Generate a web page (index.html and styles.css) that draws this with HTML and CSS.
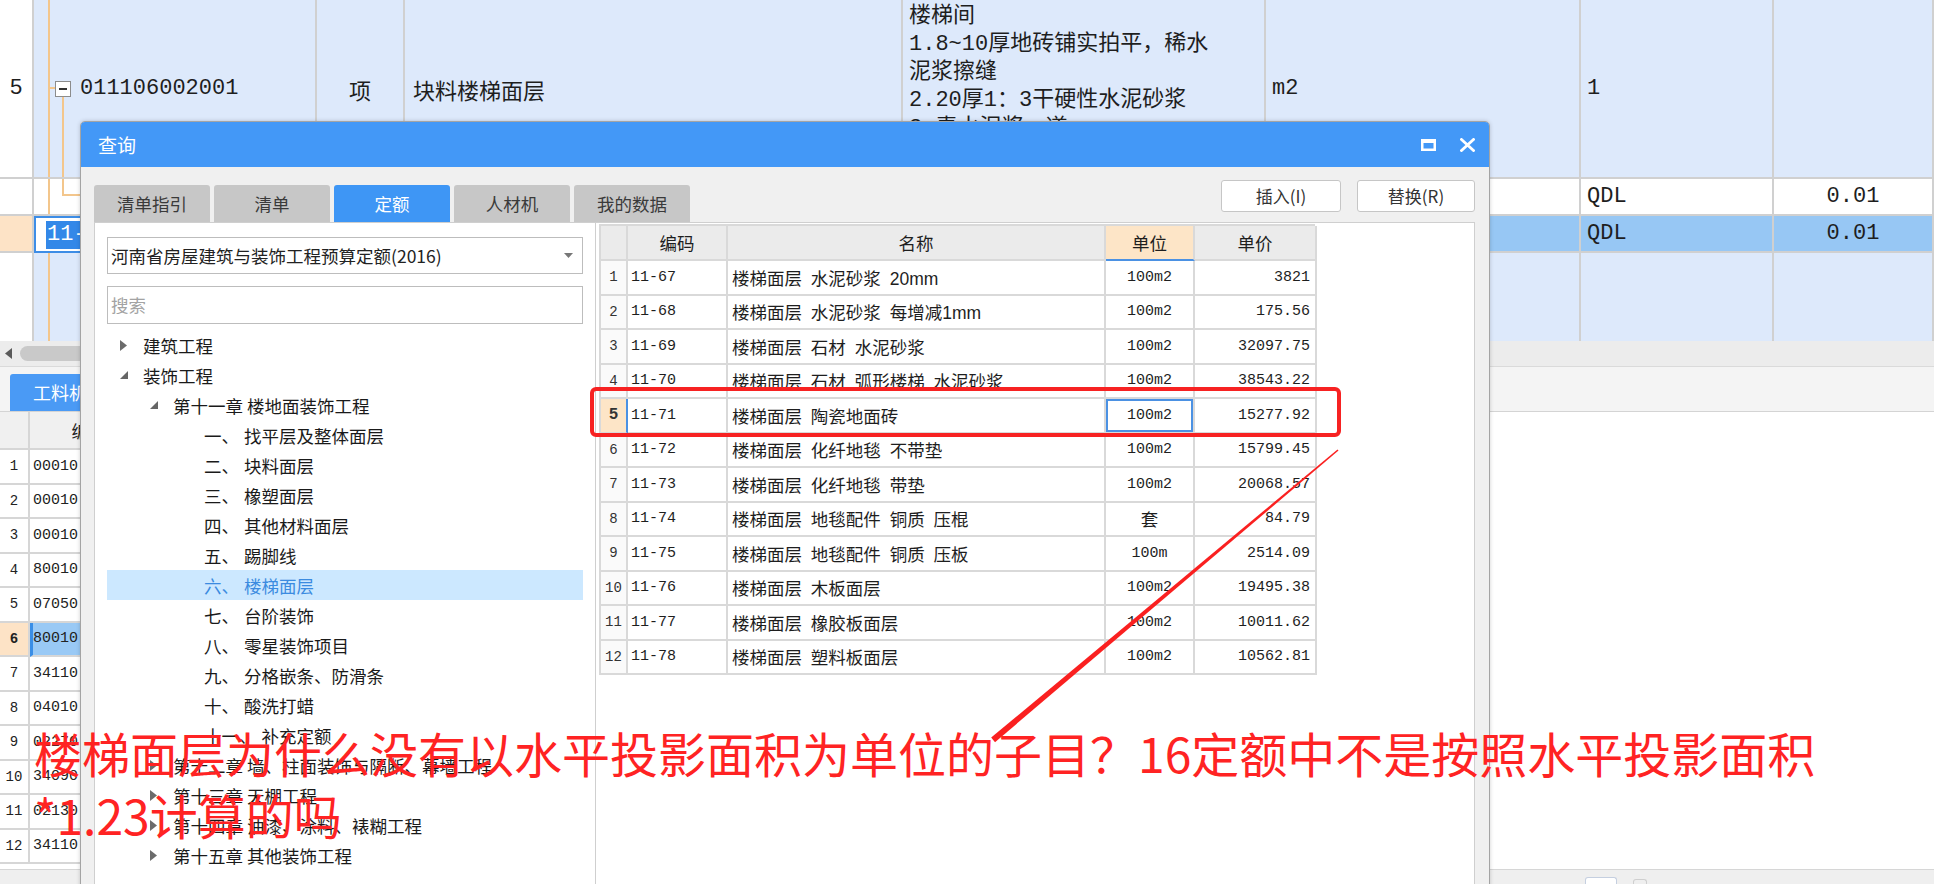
FILE: index.html
```html
<!DOCTYPE html>
<html lang="zh-CN">
<head>
<meta charset="utf-8">
<title>查询</title>
<link rel="stylesheet" href="styles.css">
</head>
<body>
<div class="app">
  <div class="topgrid">
    <div class="c ctr">5</div>
    <div class="c lb tree-r5"><span class="minus"></span><span>011106002001</span></div>
    <div class="c lb ctr cjk">项</div>
    <div class="c lb pl8 cjk">块料楼梯面层</div>
    <div class="c lb desc">楼梯间<br>1.8~10厚地砖铺实拍平，稀水<br>泥浆擦缝<br>2.20厚1：3干硬性水泥砂浆<br>3.素水泥浆一道</div>
    <div class="c lb pl6">m2</div>
    <div class="c lb pl6">1</div>
    <div class="c lb"></div>

    <div class="c"></div>
    <div class="c tree-ra"></div>
    <div class="c"></div>
    <div class="c"></div>
    <div class="c"></div>
    <div class="c"></div>
    <div class="c pl6">QDL</div>
    <div class="c ctr">0.01</div>

    <div class="c or"></div>
    <div class="c edit"><span class="selt">11-71</span></div>
    <div class="c sb"></div>
    <div class="c sb"></div>
    <div class="c sb"></div>
    <div class="c sb"></div>
    <div class="c sb pl6">QDL</div>
    <div class="c sb ctr">0.01</div>

    <div class="c nb"></div>
    <div class="c lb nb tree-fill"></div>
    <div class="c lb nb"></div>
    <div class="c lb nb"></div>
    <div class="c lb nb"></div>
    <div class="c lb nb"></div>
    <div class="c lb nb"></div>
    <div class="c lb nb"></div>
  </div>

  <div class="hscroll">
    <svg class="harrow" width="7" height="11" viewBox="0 0 7 11"><polygon points="7,0 0,5.5 7,11" fill="#5a5a5a"/></svg>
    <div class="thumb"></div>
  </div>

  <div class="btabs"><div class="btab">工料机</div></div>

  <div class="bgrid">
    <div class="bg-row bg-head"><div class="bc"></div><div class="bc hc">编码</div><div class="bc"></div></div>
    <div class="bg-row"><div class="bc rn">1</div><div class="bc code">00010</div><div class="bc"></div></div>
    <div class="bg-row"><div class="bc rn">2</div><div class="bc code">00010</div><div class="bc"></div></div>
    <div class="bg-row"><div class="bc rn">3</div><div class="bc code">00010</div><div class="bc"></div></div>
    <div class="bg-row"><div class="bc rn">4</div><div class="bc code">80010</div><div class="bc"></div></div>
    <div class="bg-row"><div class="bc rn">5</div><div class="bc code">07050</div><div class="bc"></div></div>
    <div class="bg-row"><div class="bc rn rsel">6</div><div class="bc code csel">80010</div><div class="bc"></div></div>
    <div class="bg-row"><div class="bc rn">7</div><div class="bc code">34110</div><div class="bc"></div></div>
    <div class="bg-row"><div class="bc rn">8</div><div class="bc code">04010</div><div class="bc"></div></div>
    <div class="bg-row"><div class="bc rn">9</div><div class="bc code">02270</div><div class="bc"></div></div>
    <div class="bg-row"><div class="bc rn">10</div><div class="bc code">34090</div><div class="bc"></div></div>
    <div class="bg-row"><div class="bc rn">11</div><div class="bc code">02130</div><div class="bc"></div></div>
    <div class="bg-row"><div class="bc rn">12</div><div class="bc code">34110</div><div class="bc"></div></div>
  </div>

  <div class="status"><span class="st-ico"></span><span class="st-ico2"></span></div>
</div>

<div class="dialog">
  <div class="dlg-title">
    <span class="dlg-name">查询</span>
    <div class="dlg-ctrls">
      <svg width="15" height="12" viewBox="0 0 15 12"><rect x="1.25" y="1.25" width="12.5" height="9.5" fill="none" stroke="#fff" stroke-width="2.5"/><rect x="0" y="0" width="15" height="4" fill="#fff"/></svg>
      <svg width="15" height="14" viewBox="0 0 15 14"><path d="M1.5 1.5 L13.5 12.5 M13.5 1.5 L1.5 12.5" stroke="#fff" stroke-width="2.8" stroke-linecap="square"/></svg>
    </div>
  </div>
  <div class="dlg-body">
    <div class="dlg-head">
      <div class="tabs">
        <div class="tab">清单指引</div>
        <div class="tab">清单</div>
        <div class="tab active">定额</div>
        <div class="tab">人材机</div>
        <div class="tab">我的数据</div>
      </div>
      <div class="btns">
        <div class="btn b1">插入(I)</div>
        <div class="btn b2">替换(R)</div>
      </div>
    </div>
    <div class="panes">
      <div class="lpane">
        <div class="select"><span>河南省房屋建筑与装饰工程预算定额(2016)</span><svg width="9" height="5" viewBox="0 0 9 5"><polygon points="0,0 9,0 4.5,5" fill="#777"/></svg></div>
        <div class="search">搜索</div>
        <ul class="tree">
          <li class="l0"><span class="arr"><svg width="7" height="11" viewBox="0 0 7 11"><polygon points="0,0 7,5.5 0,11" fill="#6b6b6b"/></svg></span>建筑工程</li>
          <li class="l0"><span class="arr"><svg width="8" height="8" viewBox="0 0 8 8"><polygon points="8,0 8,8 0,8" fill="#666"/></svg></span>装饰工程</li>
          <li class="l1"><span class="arr"><svg width="8" height="8" viewBox="0 0 8 8"><polygon points="8,0 8,8 0,8" fill="#666"/></svg></span>第十一章 楼地面装饰工程</li>
          <li class="l2"><span class="pre">一、</span>找平层及整体面层</li>
          <li class="l2"><span class="pre">二、</span>块料面层</li>
          <li class="l2"><span class="pre">三、</span>橡塑面层</li>
          <li class="l2"><span class="pre">四、</span>其他材料面层</li>
          <li class="l2"><span class="pre">五、</span>踢脚线</li>
          <li class="l2 sel"><span class="pre">六、</span>楼梯面层</li>
          <li class="l2"><span class="pre">七、</span>台阶装饰</li>
          <li class="l2"><span class="pre">八、</span>零星装饰项目</li>
          <li class="l2"><span class="pre">九、</span>分格嵌条、防滑条</li>
          <li class="l2"><span class="pre">十、</span>酸洗打蜡</li>
          <li class="l2"><span class="pre">十一、</span>补充定额</li>
          <li class="l1"><span class="arr"><svg width="7" height="11" viewBox="0 0 7 11"><polygon points="0,0 7,5.5 0,11" fill="#6b6b6b"/></svg></span>第十二章 墙、柱面装饰与隔断、幕墙工程</li>
          <li class="l1"><span class="arr"><svg width="7" height="11" viewBox="0 0 7 11"><polygon points="0,0 7,5.5 0,11" fill="#6b6b6b"/></svg></span>第十三章 天棚工程</li>
          <li class="l1"><span class="arr"><svg width="7" height="11" viewBox="0 0 7 11"><polygon points="0,0 7,5.5 0,11" fill="#6b6b6b"/></svg></span>第十四章 油漆、涂料、裱糊工程</li>
          <li class="l1"><span class="arr"><svg width="7" height="11" viewBox="0 0 7 11"><polygon points="0,0 7,5.5 0,11" fill="#6b6b6b"/></svg></span>第十五章 其他装饰工程</li>
        </ul>
      </div>
      <div class="rpane">
        <div class="qtable">
          <div class="th"></div><div class="th">编码</div><div class="th">名称</div><div class="th thsel">单位</div><div class="th">单价</div>

          <div class="td rn">1</div><div class="td cd">11-67</div><div class="td nm">楼梯面层 水泥砂浆 20mm</div><div class="td un">100m2</div><div class="td pr">3821</div>
          <div class="td rn">2</div><div class="td cd">11-68</div><div class="td nm">楼梯面层 水泥砂浆 每增减1mm</div><div class="td un">100m2</div><div class="td pr">175.56</div>
          <div class="td rn">3</div><div class="td cd">11-69</div><div class="td nm">楼梯面层 石材 水泥砂浆</div><div class="td un">100m2</div><div class="td pr">32097.75</div>
          <div class="td rn">4</div><div class="td cd">11-70</div><div class="td nm">楼梯面层 石材 弧形楼梯 水泥砂浆</div><div class="td un">100m2</div><div class="td pr">38543.22</div>
          <div class="td rn rsel">5</div><div class="td cd">11-71</div><div class="td nm">楼梯面层 陶瓷地面砖</div><div class="td un focus">100m2</div><div class="td pr">15277.92</div>
          <div class="td rn">6</div><div class="td cd">11-72</div><div class="td nm">楼梯面层 化纤地毯 不带垫</div><div class="td un">100m2</div><div class="td pr">15799.45</div>
          <div class="td rn">7</div><div class="td cd">11-73</div><div class="td nm">楼梯面层 化纤地毯 带垫</div><div class="td un">100m2</div><div class="td pr">20068.57</div>
          <div class="td rn">8</div><div class="td cd">11-74</div><div class="td nm">楼梯面层 地毯配件 铜质 压棍</div><div class="td un unc">套</div><div class="td pr">84.79</div>
          <div class="td rn">9</div><div class="td cd">11-75</div><div class="td nm">楼梯面层 地毯配件 铜质 压板</div><div class="td un">100m</div><div class="td pr">2514.09</div>
          <div class="td rn">10</div><div class="td cd">11-76</div><div class="td nm">楼梯面层 木板面层</div><div class="td un">100m2</div><div class="td pr">19495.38</div>
          <div class="td rn">11</div><div class="td cd">11-77</div><div class="td nm">楼梯面层 橡胶板面层</div><div class="td un">100m2</div><div class="td pr">10011.62</div>
          <div class="td rn">12</div><div class="td cd">11-78</div><div class="td nm">楼梯面层 塑料板面层</div><div class="td un">100m2</div><div class="td pr">10562.81</div>
        </div>
      </div>
    </div>
  </div>
</div>

<div class="mark-rect"></div>
<svg class="mark-line" width="1934" height="884" viewBox="0 0 1934 884"><polygon points="1338.5,450.6 1337.5,449.4 991.2,737.6 995,742.2" fill="#fa2020"/></svg>
<div class="note">楼梯面层为什么没有以水平投影面积为单位的子目？16定额中不是按照水平投影面积<br>*1.23计算的吗</div>
</body>
</html>
```

FILE: styles.css
```css
* { box-sizing: border-box; margin: 0; padding: 0; }
html, body { width: 1934px; height: 884px; overflow: hidden; }
body { position: relative; background: #fff; font-family: "Noto Sans CJK SC", sans-serif; color: #222; }

.app { display: flex; flex-direction: column; height: 884px; }

/* top grid */
.topgrid {
  display: grid;
  grid-template-columns: 34px 283px 88px 498px 363px 315px 193px 160px;
  grid-template-rows: 179px 37px 37px 88px;
  font-family: "Liberation Mono", "Noto Sans CJK SC", monospace;
  font-size: 22px;
  color: #1e1e1e;
}
.c {
  border-right: 2px solid #d0d0d0;
  border-bottom: 2px solid #d0d0d0;
  display: flex;
  align-items: center;
  white-space: nowrap;
  overflow: hidden;
  background-color: #fff;
}
.c.nb { border-bottom: none; }
.c.lb { background-color: #dde9fb; }
.c.sb { background-color: #97c7f4; }
.c.or { background-color: #fde3c6; }
.c.ctr { justify-content: center; }
.c.pl6 { padding-left: 6px; }
.c.pl8 { padding-left: 8px; }
.cjk { font-family: "Noto Sans CJK SC", sans-serif; }
.desc { align-items: flex-start; padding: 3px 0 0 6px; line-height: 28px; }

.tree-r5 {
  padding-left: 21px;
  background-image:
    linear-gradient(#f3c68c, #f3c68c),
    linear-gradient(#f3c68c, #f3c68c),
    linear-gradient(#f3c68c, #f3c68c);
  background-position: 14px 0, 28px 97px, 14px 87px;
  background-size: 2px 100%, 2px 100%, 8px 2px;
  background-repeat: no-repeat;
}
.minus {
  width: 16px; height: 16px;
  border: 1px solid #8c8c8c;
  background: #fff linear-gradient(#333, #333) center / 8px 2px no-repeat;
  margin-right: 9px;
  flex: none;
}
.tree-ra {
  background-image:
    linear-gradient(#f3c68c, #f3c68c),
    linear-gradient(#f3c68c, #f3c68c),
    linear-gradient(#f3c68c, #f3c68c);
  background-position: 14px 0, 28px 0, 28px 15px;
  background-size: 2px 100%, 2px 16px, 100% 2px;
  background-repeat: no-repeat;
}
.tree-fill {
  background-image: linear-gradient(#f3c68c, #f3c68c);
  background-position: 14px 0;
  background-size: 2px 100%;
  background-repeat: no-repeat;
}
.edit { border: 2px solid #3d8de6; padding-left: 10px; }
.selt { background: #3388e8; color: #fff; line-height: 28px; padding: 0 1px; }

/* horizontal scroll */
.hscroll {
  height: 26px;
  background: #ececec;
  border-bottom: 1px solid #dadada;
  display: flex;
  align-items: center;
  padding-left: 5px;
}
.harrow { flex: none; }
.thumb { width: 700px; height: 15px; border-radius: 8px; background: #c9c9c9; margin-left: 8px; }

/* bottom pane */
.btabs {
  height: 45px;
  background: #f4f4f4;
  border-bottom: 1px solid #d4d4d4;
  display: flex;
  align-items: flex-end;
  padding-left: 10px;
}
.btab {
  width: 110px; height: 37px;
  background: #4a9af5;
  color: #fff;
  font-size: 18px;
  line-height: 37px;
  padding-left: 23px;
  border-radius: 3px 3px 0 0;
}
.bgrid { width: 1400px; flex: 1; }
.bg-row { display: grid; grid-template-columns: 30px 120px 1250px; height: 34.5px; }
.bg-head { height: 38px; background: #f0f0f0; }
.bc {
  border-right: 2px solid #d6d6d6;
  border-bottom: 2px solid #d6d6d6;
  display: flex; align-items: center;
  white-space: nowrap; overflow: hidden;
  font-family: "Liberation Mono", monospace;
  font-size: 15px;
  color: #222;
}
.bc.hc { justify-content: center; font-family: "Noto Sans CJK SC", sans-serif; font-size: 17.5px; }
.bc.rn { justify-content: center; font-size: 14px; }
.bc.code { padding-left: 3px; }
.bc.rsel { background: #fde3c6; font-weight: bold; }
.bc.csel { background: #99c9f5; border-left: 3px solid #3a8ee6; padding-left: 0; }

.status {
  height: 15px;
  background: #efefef;
  border-top: 1px solid #d6d6d6;
  display: flex;
  align-items: flex-end;
  padding-left: 1585px;
}
.st-ico { width: 32px; height: 7px; border: 1px solid #c5cfe0; border-bottom: none; border-radius: 3px 3px 0 0; background: #fff; }
.st-ico2 { width: 14px; height: 5px; margin-left: 16px; border: 1px solid #cfcfcf; border-bottom: none; border-radius: 3px 3px 0 0; }

/* dialog */
.dialog {
  position: absolute;
  left: 80px; top: 121px;
  width: 1410px; height: 800px;
  border: 1px solid #a4a4a4;
  border-radius: 5px 5px 0 0;
  background: #f0f0f0;
  box-shadow: 0 0 4px rgba(0,0,0,0.18);
  display: flex;
  flex-direction: column;
  overflow: hidden;
}
.dlg-title {
  height: 45px;
  background: #4398f7;
  display: flex;
  align-items: center;
  justify-content: space-between;
  padding: 0 14px 0 17px;
  flex: none;
}
.dlg-name { color: #fff; font-size: 19px; }
.dlg-ctrls { display: flex; align-items: center; gap: 24px; }
.dlg-body { flex: 1; padding: 13px 14px 0 13px; display: flex; flex-direction: column; }
.dlg-head { display: flex; justify-content: space-between; align-items: flex-start; height: 42px; flex: none; }
.tabs { display: flex; gap: 4px; margin-top: 5px; }
.tab {
  width: 116px; height: 37px;
  background: #c7c7c7;
  color: #3a3a3a;
  font-size: 17.5px;
  line-height: 37px;
  text-align: center;
  border-radius: 3px 3px 0 0;
}
.tab.active { background: #3e96f5; color: #fff; }
.btns { display: flex; gap: 16px; }
.btn {
  height: 32px;
  background: #fff;
  border: 1px solid #c6c6c6;
  border-radius: 3px;
  font-size: 17px;
  line-height: 30px;
  text-align: center;
  color: #333;
}
.btn.b1 { width: 120px; }
.btn.b2 { width: 118px; }

.panes { flex: 1; display: flex; }
.lpane {
  width: 502px;
  background: #fff;
  border: 1px solid #cfcfcf;
  padding: 14px 12px 0 12px;
}
.select {
  height: 37px;
  border: 1px solid #bdbdbd;
  display: flex;
  align-items: center;
  justify-content: space-between;
  padding: 0 9px 0 3px;
  font-size: 17.5px;
  color: #222;
}
.search {
  margin-top: 12px;
  height: 38px;
  border: 1px solid #bdbdbd;
  padding-left: 3px;
  font-size: 17.5px;
  line-height: 36px;
  color: #a3a3a3;
}
.tree { list-style: none; margin-top: 6px; }
.tree li {
  height: 30px;
  display: flex;
  align-items: center;
  font-size: 17.5px;
  color: #1a1a1a;
  white-space: nowrap;
}
.tree .arr { width: 23px; flex: none; display: flex; align-items: center; }
.tree .l0 { padding-left: 13px; }
.tree .l1 { padding-left: 43px; }
.tree .l2 { padding-left: 97px; }
.tree .pre { margin-right: 5px; }
.tree li.sel { background: #cce8ff; color: #3b8be0; }

.rpane {
  flex: 1;
  background: #fff;
  border: 1px solid #cfcfcf;
  border-left: none;
  padding: 1px 0 0 3px;
}
.qtable {
  display: grid;
  grid-template-columns: 27px 100px 378px 89px 122px;
  grid-template-rows: 35px;
  grid-auto-rows: 34.5px;
  width: 716px;
  border-left: 2px solid #d9d9d9;
  border-top: 2px solid #d9d9d9;
}
.th, .td {
  border-right: 2px solid #d9d9d9;
  border-bottom: 2px solid #d9d9d9;
  display: flex;
  align-items: center;
  white-space: nowrap;
  overflow: hidden;
  color: #1e1e1e;
}
.th { background: #ebebeb; justify-content: center; font-size: 17.5px; }
.th.thsel { background: #fde5c7; border-bottom-color: #4b91e3; }
.td.rn { justify-content: center; font-family: "Liberation Mono", monospace; font-size: 14px; color: #333; background: #fafafa; }
.td.rsel { background: #fde5c7; font-weight: bold; font-size: 16px; border-right-color: #4b91e3; }
.td.cd { padding-left: 3px; font-family: "Liberation Mono", monospace; font-size: 15px; }
.td.nm { padding-left: 4px; font-family: "Liberation Sans", "Noto Sans CJK SC", sans-serif; font-size: 17.5px; word-spacing: 4px; }
.td.un { justify-content: center; font-family: "Liberation Mono", "Noto Sans CJK SC", monospace; font-size: 15px; }
.td.unc { font-size: 17.5px; }
.td.focus { box-shadow: inset 0 0 0 2px #4b91e3; }
.td.pr { justify-content: flex-end; padding-right: 5px; font-family: "Liberation Mono", monospace; font-size: 15px; }

/* annotations */
.mark-rect {
  position: absolute;
  left: 590px; top: 387px;
  width: 751px; height: 50px;
  border: 4px solid #f72222;
  border-radius: 6px;
}
.mark-line { position: absolute; left: 0; top: 0; pointer-events: none; }
.note {
  position: absolute;
  left: 34px; top: 721px;
  font-size: 48px;
  line-height: 62px;
  color: #ff2323;
  white-space: nowrap;
}
```
